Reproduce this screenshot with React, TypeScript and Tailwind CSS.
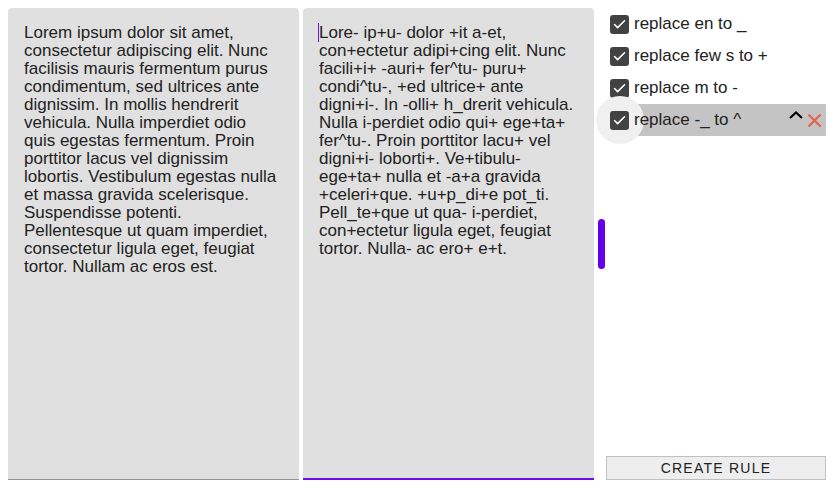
import { Check } from "lucide-react";

const original =
  "Lorem ipsum dolor sit amet, consectetur adipiscing elit. Nunc facilisis mauris fermentum purus condimentum, sed ultrices ante dignissim. In mollis hendrerit vehicula. Nulla imperdiet odio quis egestas fermentum. Proin porttitor lacus vel dignissim lobortis. Vestibulum egestas nulla et massa gravida scelerisque. Suspendisse potenti. Pellentesque ut quam imperdiet, consectetur ligula eget, feugiat tortor. Nullam ac eros est.";

const replaced =
  "Lore- ip+u- dolor +it a-et, con+ectetur adipi+cing elit. Nunc facili+i+ -auri+ fer^tu- puru+ condi^tu-, +ed ultrice+ ante digni+i-. In -olli+ h_drerit vehicula. Nulla i-perdiet odio qui+ ege+ta+ fer^tu-. Proin porttitor lacu+ vel digni+i- loborti+. Ve+tibulu- ege+ta+ nulla et -a+a gravida +celeri+que. +u+p_di+e pot_ti. Pell_te+que ut qua- i-perdiet, con+ectetur ligula eget, feugiat tortor. Nulla- ac ero+ e+t.";

const rules = [
  { label: "replace en to _", active: false },
  { label: "replace few s to +", active: false },
  { label: "replace m to -", active: false },
  { label: "replace -_ to ^", active: true },
];

export default function App() {
  return (
    <div className="flex h-screen bg-white p-2 font-['Liberation_Sans',Arial,sans-serif] text-[17px] text-[#222]">
      <div className="w-[291px] shrink-0 rounded-t-[4px] border-b border-[#949494] bg-[#e0e0e0] pl-4 pr-5 pt-[16px] leading-[18px]">
        {original}
      </div>

      <div className="ml-1 w-[291px] shrink-0 rounded-t-[4px] border-b-2 border-[#6a11e8] bg-[#e0e0e0] px-4 pt-[16px] leading-[18px]">
        <span className="-ml-px border-l border-[#6a11e8]" />
        {replaced}
      </div>

      <div className="ml-1 w-[8px] shrink-0 pt-[211px]">
        <div className="h-[50px] w-[7px] rounded-full bg-[#6200ee]" />
      </div>

      <div className="flex w-[220px] shrink-0 flex-col">
        <ul>
          {rules.map((rule) => (
            <li
              key={rule.label}
              className={
                "relative flex h-8 items-center pl-1 " +
                (rule.active ? "bg-[#c4c4c4]" : "")
              }
            >
              {rule.active && (
                <span className="absolute left-[-10px] top-[-8px] h-12 w-12 rounded-full bg-[#f0f0f0]" />
              )}
              <span className="relative flex h-[19px] w-[19px] items-center justify-center rounded-[3px] bg-[#424242]">
                <Check size={15} strokeWidth={2.5} className="text-white" />
              </span>
              <span className="relative ml-[5px] flex-1">{rule.label}</span>
              {rule.active && (
                <span className="mr-[4px] flex items-start">
                  <svg width="14" height="8" viewBox="0 0 14 8" className="-mt-[1px]">
                    <polyline points="1,7 7,1.5 13,7" fill="none" stroke="#000" strokeWidth="2.2" />
                  </svg>
                  <svg width="15" height="15" viewBox="0 0 15 15" className="ml-[4px] mt-[1px]">
                    <path d="M1.5 1.5 L13.5 13.5 M13.5 1.5 L1.5 13.5" stroke="#e0664f" strokeWidth="2.2" />
                  </svg>
                </span>
              )}
            </li>
          ))}
        </ul>

        <button
          type="button"
          className="mt-auto h-[24px] w-full border border-[#c0c0c0] bg-[#eeeeee] text-[14px] tracking-[1.25px] text-[#222]"
        >
          CREATE RULE
        </button>
      </div>
    </div>
  );
}
